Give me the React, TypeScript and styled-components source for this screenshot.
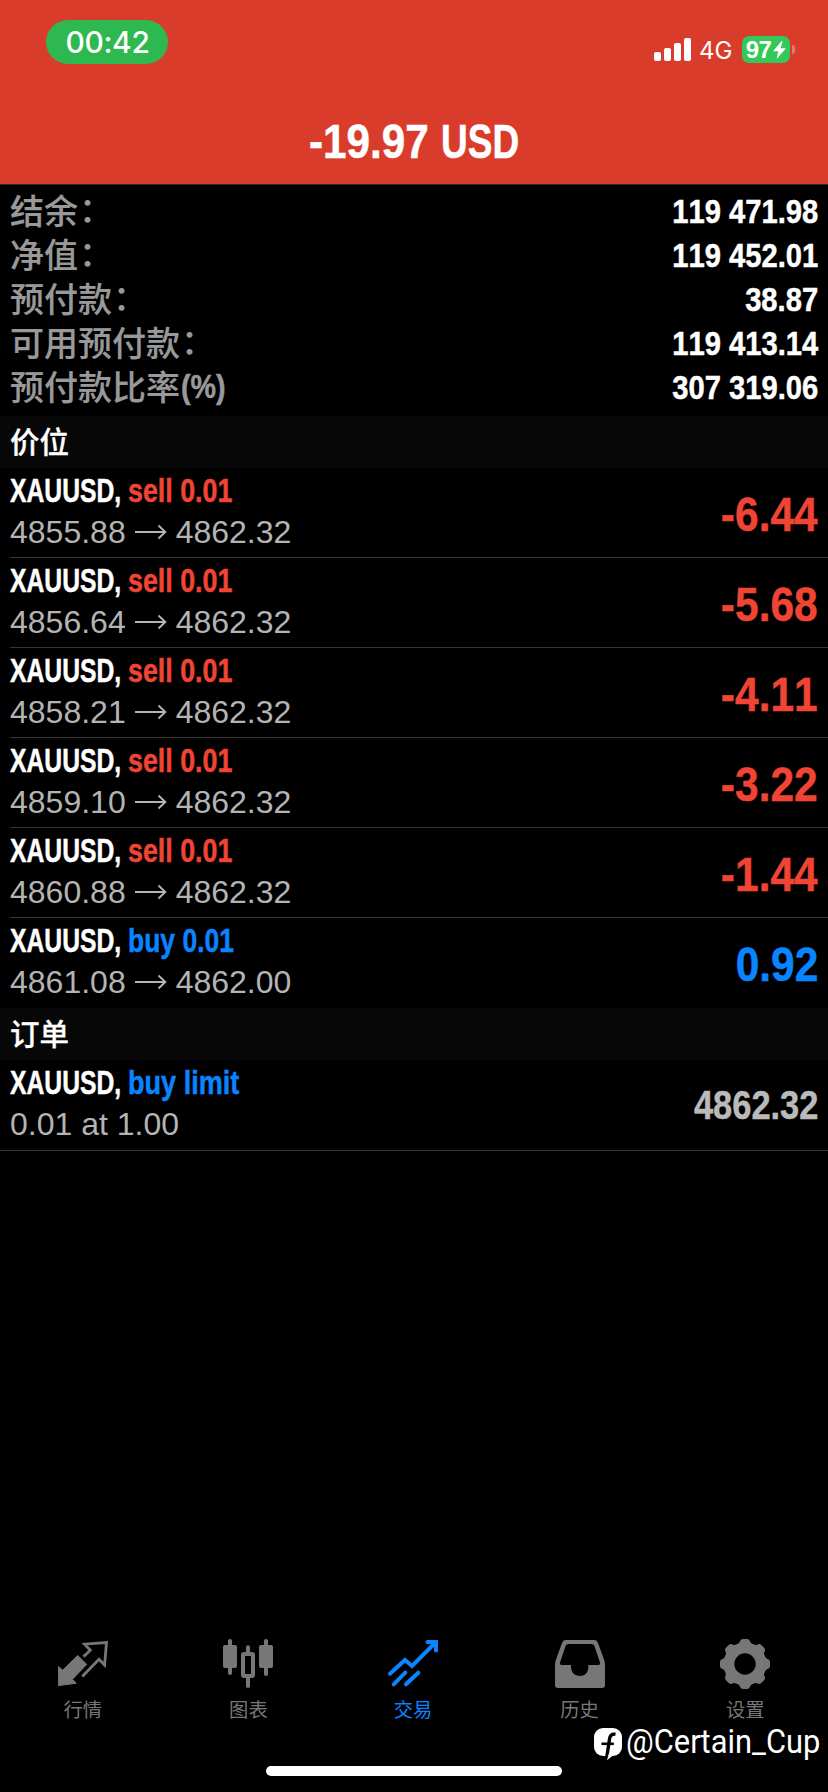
import styled, { createGlobalStyle } from 'styled-components';

const RED = '#f04534'
const BLUE = '#0a84ff'

const account = [
    { label: '结余', value: '119 471.98' },
    { label: '净值', value: '119 452.01' },
    { label: '预付款', value: '38.87' },
    { label: '可用预付款', value: '119 413.14' },
    { label: '预付款比率', suffix: '(%)', value: '307 319.06' },
]

const positions = [
    { side: 'sell', open: '4855.88', current: '4862.32', profit: '-6.44' },
    { side: 'sell', open: '4856.64', current: '4862.32', profit: '-5.68' },
    { side: 'sell', open: '4858.21', current: '4862.32', profit: '-4.11' },
    { side: 'sell', open: '4859.10', current: '4862.32', profit: '-3.22' },
    { side: 'sell', open: '4860.88', current: '4862.32', profit: '-1.44' },
    { side: 'buy', open: '4861.08', current: '4862.00', profit: '0.92' },
]

const QuotesIcon = () => (
    <svg width="50" height="50" viewBox="0 0 50 50">
        <path d="M.3 27.5 4.8 31.2 19.7 16.4 28.7 25.4 14.4 40.3 18.2 44.3.3 46.6z" fill="currentColor" stroke="currentColor" strokeWidth="1" strokeLinejoin="round" />
        <path d="M25.5 17.6 32.3 11.3 26.5 5.2 48.5 3.6 46.6 26 41 20.3 24.3 37.5" fill="none" stroke="currentColor" strokeWidth="2.8" />
    </svg>
)

const ChartIcon = () => (
    <svg width="50" height="50" viewBox="0 0 50 50" fill="currentColor">
        <rect x="5" y="0" width="4" height="36" rx="2" />
        <rect x="0" y="6" width="14" height="23" rx="2" />
        <rect x="23" y="6.3" width="4" height="9" rx="2" />
        <rect x="23" y="37" width="4" height="12" rx="2" />
        <rect x="20" y="15" width="10" height="22" rx="1" fill="none" stroke="currentColor" strokeWidth="4" />
        <rect x="41" y="0" width="4" height="37" rx="2" />
        <rect x="36" y="6" width="14" height="23" rx="2" />
    </svg>
)

const TradeIcon = () => (
    <svg width="50" height="50" viewBox="0 0 50 50" fill="none" stroke="currentColor" strokeWidth="4" strokeLinecap="round">
        <path d="M2 34.7 17 21 24 27 47 4" />
        <path d="M39.5 3H48v8.5" />
        <path d="M5.7 45.3 17.3 33.7M18 45.3 30.3 33.7" />
    </svg>
)

const HistoryIcon = () => (
    <svg width="50" height="50" viewBox="0 0 50 50">
        <path
            fillRule="evenodd"
            fill="currentColor"
            d="M11 1H39Q42 1 43 4L49.2 21Q50 23.5 50 26V46Q50 49 47 49H3Q0 49 0 46V26Q0 23.5.8 21L7 4Q8 1 11 1ZM13.5 5Q11.3 5 10.6 7L5 23.5Q4.5 26 6.8 26H16V28C16 33 19.5 37 25 37S33.3 33 33.3 28V26H43.2Q45.5 26 45 23.5L39.4 7Q38.7 5 36.5 5Z"
        />
    </svg>
)

const teeth = [0, 45, 90, 135, 180, 225, 270, 315]

const SettingsIcon = () => (
    <svg width="50" height="50" viewBox="0 0 50 50" fill="currentColor">
        <circle cx="25" cy="25" r="16" fill="none" stroke="currentColor" strokeWidth="10.6" />
        {teeth.map((angle) => (
            <path key={angle} d="M17 5.2Q19.3 4.6 20 2.3 20.7 0 23 0H27Q29.3 0 30 2.3 30.7 4.6 33 5.2L31 9H19Z" transform={`rotate(${angle} 25 25)`} />
        ))}
    </svg>
)

const tabs = [
    { label: '行情', Icon: QuotesIcon },
    { label: '图表', Icon: ChartIcon },
    { label: '交易', Icon: TradeIcon, active: true },
    { label: '历史', Icon: HistoryIcon },
    { label: '设置', Icon: SettingsIcon },
]

const Arrow = () => (
    <svg width="32" height="16" viewBox="0 0 32 16" fill="none" stroke="currentColor" strokeWidth="1.9">
        <path d="M0 8H30M23.5 1.5 30.3 8 23.5 14.5" />
    </svg>
)

const App = () => {
    return (
        <Screen>
            <GlobalStyle />
            <Header>
                <StatusBar>
                    <Clock>00:42</Clock>
                    <StatusRight>
                        <Signal>
                            <Bar $height={9} />
                            <Bar $height={13} />
                            <Bar $height={18} />
                            <Bar $height={23} />
                        </Signal>
                        <Network>4G</Network>
                        <Battery>
                            97
                            <svg width="13" height="18" viewBox="0 0 13 18"><path d="M8.6 0 0 10.2H5.2L3.6 18 13 7.2H7.6L9.6.4z" fill="#fff" /></svg>
                        </Battery>
                        <BatteryCap />
                    </StatusRight>
                </StatusBar>
                <Total>
                    <Condensed $scale={0.862} $width={132}>-19.97</Condensed>
                    <Condensed $scale={0.755} $width={78}>USD</Condensed>
                </Total>
            </Header>

            <Account>
                {account.map((item) => (
                    <AccountRow key={item.label}>
                        <Label>
                            {item.label}
                            {item.suffix ? <Suffix $scale={0.855}>{item.suffix}</Suffix> : <Colon>：</Colon>}
                        </Label>
                        <Value $scale={0.857}>{item.value}</Value>
                    </AccountRow>
                ))}
            </Account>

            <SectionTitle>价位</SectionTitle>
            {positions.map((item, i) => (
                <Row key={item.open}>
                    <RowBody $line={i < positions.length - 1}>
                        <div>
                            <RowTitle>
                                <Condensed $scale={0.737} $width={118}>XAUUSD,</Condensed>
                                <Side $color={item.side === 'sell' ? RED : BLUE} $scale={item.side === 'sell' ? 0.8 : 0.79}>{item.side} 0.01</Side>
                            </RowTitle>
                            <Prices>{item.open}<Arrow />{item.current}</Prices>
                        </div>
                        <Profit $color={item.side === 'sell' ? RED : BLUE} $scale={0.867}>{item.profit}</Profit>
                    </RowBody>
                </Row>
            ))}

            <SectionTitle>订单</SectionTitle>
            <OrderRow>
                <div>
                    <RowTitle>
                        <Condensed $scale={0.737} $width={118}>XAUUSD,</Condensed>
                        <Side $color={BLUE} $scale={0.808}>buy limit</Side>
                    </RowTitle>
                    <Prices>0.01 at 1.00</Prices>
                </div>
                <OrderPrice $scale={0.85}>4862.32</OrderPrice>
            </OrderRow>

            <TabBar>
                {tabs.map(({ label, Icon, active }) => (
                    <Tab key={label} $active={active}>
                        <Icon />
                        {label}
                    </Tab>
                ))}
            </TabBar>
            <HomeIndicator />

            <Watermark>
                <svg width="29" height="33" viewBox="0 0 29 33">
                    <rect width="28" height="28" rx="9" fill="#fff" />
                    <path d="M21.5 6.2Q16.5 5.4 15.6 10.5L12.8 29" fill="none" stroke="#000" strokeWidth="3.4" />
                    <path d="M7.5 15.8H19.8" stroke="#000" strokeWidth="2.6" />
                    <path d="M15 25 13 32.2 19.5 27z" fill="#fff" />
                </svg>
                <Author $scale={0.935}>@Certain_Cup</Author>
            </Watermark>
        </Screen>
    )
}

const GlobalStyle = createGlobalStyle`
    body {
        margin: 0;
        background: #000;
    }
    * {
        box-sizing: border-box;
    }
    svg {
        display: block;
        flex: none;
    }
`

const Screen = styled('div')`
    position: relative;
    display: flex;
    flex-direction: column;
    width: 828px;
    height: 1792px;
    overflow: hidden;
    background: #000;
    color: #fff;
    font-family: 'Liberation Sans', 'Noto Sans CJK SC', sans-serif;
    font-kerning: none;
`

const Header = styled('header')`
    height: 185px;
    background: #da3c2b;
    border-bottom: 1px solid #2b2b2b;
`

const StatusBar = styled('div')`
    display: flex;
    justify-content: space-between;
    padding: 20px 33px 0 46px;
    height: 106px;
    font-family: Inter, sans-serif;
`

const Clock = styled('div')`
    width: 122px;
    height: 44px;
    padding-left: 1px;
    border-radius: 22px;
    background: #2eb850;
    font-size: 30px;
    font-weight: 500;
    line-height: 45px;
    letter-spacing: -0.4px;
    text-align: center;
`

const StatusRight = styled('div')`
    display: flex;
    align-items: center;
    height: 27px;
    margin-top: 16px;
`

const Signal = styled('div')`
    display: flex;
    align-items: flex-end;
    gap: 3px;
    height: 23px;
`

const Bar = styled('div')<{ $height: number }>`
    width: 7px;
    height: ${(props) => props.$height}px;
    border-radius: 2px;
    background: #fff;
`

const Network = styled('div')`
    width: 51px;
    padding: 2px 0 0 8px;
    font-size: 24px;
    line-height: 30px;
`

const Battery = styled('div')`
    display: flex;
    align-items: center;
    justify-content: center;
    gap: 2px;
    width: 48px;
    height: 27px;
    border-radius: 7px;
    background: #34c759;
    font-family: 'Liberation Sans', sans-serif;
    font-size: 24px;
    font-weight: 700;
    letter-spacing: -0.7px;
`

const BatteryCap = styled('div')`
    width: 3px;
    height: 9px;
    margin-left: 2px;
    border-radius: 0 4px 4px 0;
    background: #e5796d;
`

// bold text squeezed horizontally, $width is the room it takes in the row
const Condensed = styled('span')<{ $scale: number; $width?: number }>`
    display: inline-block;
    width: ${(props) => (props.$width ? `${props.$width}px` : 'auto')};
    font-weight: 700;
    white-space: nowrap;
    transform: scaleX(${(props) => props.$scale});
    transform-origin: left center;
    -webkit-text-stroke: 0.5px currentColor;
`

const CondensedRight = styled(Condensed)`
    transform-origin: right center;
`

const Total = styled('h1')`
    display: flex;
    justify-content: center;
    margin: 0;
    font-size: 49px;
    line-height: 70px;
`

const Account = styled('section')`
    height: 231px;
    padding: 4px 10px 0 10px;
`

const AccountRow = styled('div')`
    display: flex;
    justify-content: space-between;
    height: 44px;
    line-height: 44px;
`

const Label = styled('div')`
    display: flex;
    height: 42px;
    color: #999;
    font-family: 'Noto Sans CJK SC', sans-serif;
    font-size: 34px;
    font-weight: 500;
    line-height: 42px;
    -webkit-text-stroke: 0.2px currentColor;
`

const Colon = styled('span')`
    margin: -2px 0 0 1px;
`

const Suffix = styled(Condensed)`
    margin-left: 1px;
    font-family: 'Liberation Sans', sans-serif;
    font-size: 33.5px;
    line-height: 44px;
`

const Value = styled(CondensedRight)`
    font-size: 34px;
`

const SectionTitle = styled('h2')`
    height: 52px;
    margin: 0;
    padding-left: 10px;
    background: #070707;
    font-family: 'Noto Sans CJK SC', sans-serif;
    font-size: 29.5px;
    font-weight: 500;
    line-height: 49px;
    -webkit-text-stroke: 0.3px currentColor;
`

const Row = styled('div')`
    height: 90px;
    padding-left: 10px;
`

const RowBody = styled('div')<{ $line?: boolean }>`
    display: flex;
    justify-content: space-between;
    height: 90px;
    padding-right: 10px;
    border-bottom: 1px solid ${(props) => (props.$line ? '#363636' : 'transparent')};
`

const OrderRow = styled('div')`
    display: flex;
    justify-content: space-between;
    height: 91px;
    padding: 0 10px;
    border-bottom: 1px solid #363636;
`

const RowTitle = styled('div')`
    display: flex;
    font-size: 33.5px;
    line-height: 45px;
`

const Side = styled(Condensed)<{ $color: string }>`
    color: ${(props) => props.$color};
`

const Prices = styled('div')`
    display: flex;
    align-items: center;
    gap: 9px;
    color: #b4b4b4;
    font-size: 32px;
    line-height: 38px;
`

const Profit = styled(CondensedRight)<{ $color: string }>`
    color: ${(props) => props.$color};
    font-size: 49px;
    line-height: 93px;
`

const OrderPrice = styled(CondensedRight)`
    color: #bababa;
    font-size: 40.5px;
    line-height: 90px;
`

const TabBar = styled('nav')`
    display: grid;
    grid-template-columns: repeat(5, 1fr);
    margin-top: auto;
    height: 127px;
`

const Tab = styled('div')<{ $active?: boolean }>`
    display: flex;
    flex-direction: column;
    align-items: center;
    gap: 6px;
    padding-right: ${(props) => (props.$active ? 2 : 0)}px;
    color: ${(props) => (props.$active ? BLUE : '#777')};
    font-family: 'Noto Sans CJK SC', sans-serif;
    font-size: 19.3px;
    line-height: 28px;
`

const HomeIndicator = styled('div')`
    width: 296px;
    height: 10px;
    margin: 0 auto 16px;
    border-radius: 5px;
    background: #fff;
`

const Watermark = styled('div')`
    position: absolute;
    left: 594px;
    top: 1728px;
    display: flex;
    gap: 3px;
    height: 33px;
`

const Author = styled(Condensed)`
    font-family: Roboto, sans-serif;
    font-size: 33px;
    font-weight: 400;
    line-height: 28px;
    -webkit-text-stroke: 0;
`

export default App
